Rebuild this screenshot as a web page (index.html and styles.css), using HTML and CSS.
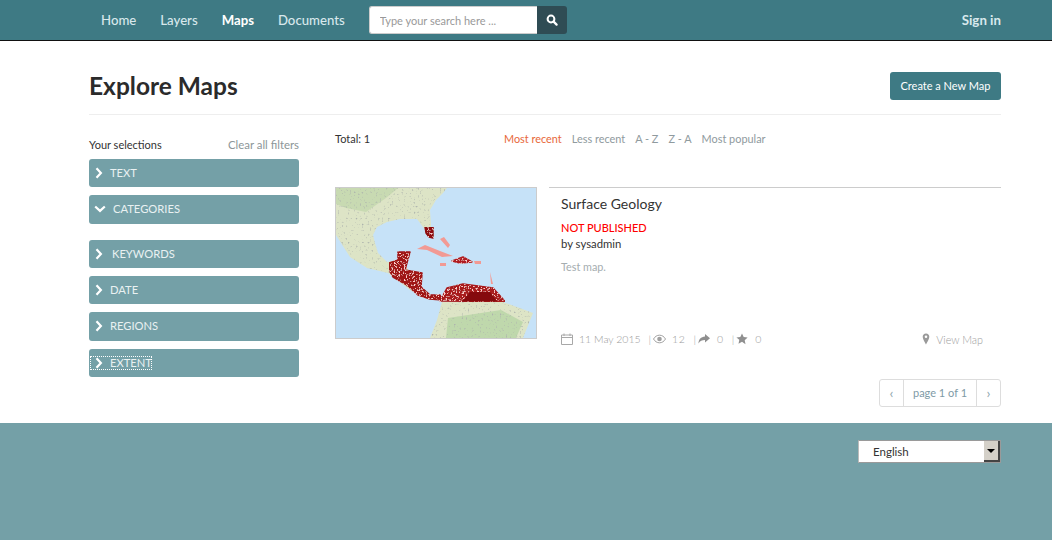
FILE: index.html
```html
<!DOCTYPE html>
<html>

<head>
    <title>Explore Maps</title>
    <link rel="stylesheet" href="styles.css">
</head>

<body>
    <header class="navbar">
        <nav class="nav-links">
            <a href="#">Home</a>
            <a href="#">Layers</a>
            <a href="#" class="active">Maps</a>
            <a href="#">Documents</a>
        </nav>
        <form class="search">
            <input type="text" placeholder="Type your search here ...">
            <button type="button" aria-label="Search">
                <svg width="12" height="12" viewBox="0 0 12 12"><circle cx="5" cy="5" r="3.4" fill="none" stroke="#fff" stroke-width="2"/><path d="M7.6 7.6l3 3" stroke="#fff" stroke-width="2.2" stroke-linecap="round"/></svg>
            </button>
        </form>
        <a href="#" class="sign-in">Sign in</a>
    </header>

    <main class="page">
        <div class="page-head">
            <h1>Explore Maps</h1>
            <a href="#" class="btn-create">Create a New Map</a>
        </div>

        <div class="columns">
            <aside class="sidebar">
                <div class="selections">
                    <span>Your selections</span>
                    <a href="#">Clear all filters</a>
                </div>
                <div class="filter"><svg class="chev" viewBox="0 0 8 12"><path d="M1.500 1.200l4.400 4.800-4.400 4.800" /></svg><span class="t-text">TEXT</span></div>
                <div class="filter tall open"><svg class="chev-down" viewBox="0 0 12 8"><path d="M1.200 1.500l4.800 4.400 4.800-4.400" /></svg><span class="t-cat">CATEGORIES</span></div>
                <div class="filter"><svg class="chev" viewBox="0 0 8 12"><path d="M1.500 1.200l4.400 4.800-4.400 4.800" /></svg><span class="t-key">KEYWORDS</span></div>
                <div class="filter"><svg class="chev" viewBox="0 0 8 12"><path d="M1.500 1.200l4.400 4.800-4.400 4.800" /></svg><span class="t-text">DATE</span></div>
                <div class="filter tall"><svg class="chev" viewBox="0 0 8 12"><path d="M1.500 1.200l4.400 4.800-4.400 4.800" /></svg><span class="t-text">REGIONS</span></div>
                <div class="filter focused"><svg class="chev" viewBox="0 0 8 12"><path d="M1.500 1.200l4.400 4.800-4.400 4.800" /></svg><span class="t-text">EXTENT</span></div>
            </aside>

            <section class="results">
                <div class="toolbar">
                    <span class="total">Total: 1</span>
                    <div class="sort">
                        <a href="#" class="current">Most recent</a>
                        <a href="#">Less recent</a>
                        <a href="#">A - Z</a>
                        <a href="#">Z - A</a>
                        <a href="#">Most popular</a>
                    </div>
                </div>

                <article class="item">
                    <svg class="thumb" viewBox="0 0 200 150" preserveAspectRatio="none">
                        <defs>
                            <filter id="land-noise" x="0" y="0" width="100%" height="100%">
                                <feTurbulence type="fractalNoise" baseFrequency=".5" numOctaves="2" seed="4" result="n"/>
                                <feColorMatrix in="n" values="0 0 0 0 .42  0 0 0 0 .45  0 0 0 0 .42  0 0 0 5 -3.100" result="dots"/>
                                <feComposite in="dots" in2="SourceGraphic" operator="in" result="cut"/>
                                <feMerge><feMergeNode in="SourceGraphic"/><feMergeNode in="cut"/></feMerge>
                            </filter>
                            <filter id="red-noise" x="0" y="0" width="100%" height="100%">
                                <feTurbulence type="fractalNoise" baseFrequency=".6" numOctaves="2" seed="9" result="n"/>
                                <feColorMatrix in="n" values="0 0 0 0 .98  0 0 0 0 .62  0 0 0 0 .6  0 0 0 7 -3.900" result="dots"/>
                                <feComposite in="dots" in2="SourceGraphic" operator="in" result="cut"/>
                                <feMerge><feMergeNode in="SourceGraphic"/><feMergeNode in="cut"/></feMerge>
                            </filter>
                        </defs>
                        <rect width="200" height="150" fill="#c6e2f8"/>
                        <g filter="url(#land-noise)">
                            <path fill="#dde4c6" d="M0 0H111L107 5 100 12 94 22 95 37 94 49 87 39 81 31 64 31 51 34 41 39 37 47 39 55 42 65 51 74 62 72 74 64 70 78 78 92 84 108 94 112 74 102 52 85 31 80 14 69 0 47Z"/>
                            <path fill="#c8dab2" d="M0 0H62L50 10 30 24 10 20 0 16Z"/>
                            <path fill="#dde4c6" d="M106 114H167L197 125 187 150H94L101 132Z"/>
                            <path fill="#bfd8ac" d="M112 130L165 122 187 134 180 150H110Z"/>
                        </g>
                        <g fill="#f29a94">
                            <path d="M81 61L89 57 104 63 117 68 106 69 91 62Z"/>
                            <path d="M138 73h7v3h-6ZM104 75h6v3h-6ZM104 51l4-2 6 8-2 3ZM154 84l3 12h-2Z"/>
                        </g>
                        <g filter="url(#red-noise)" stroke-width="1.500" stroke-linejoin="round">
                            <path fill="#8e0f12" stroke="#8e0f12" d="M89 39H97L97 50 93 49 90 45Z"/>
                            <path fill="#a01517" stroke="#a01517" d="M53 75L62 72 62 64 74 64 69 82 86 85 85 99 94 107 104 107 106 112 94 111 82 107 71 97 57 89 53 82Z"/>
                            <path fill="#b01f21" stroke="#b01f21" d="M116 73L127 69 136 74 124 75Z"/>
                            <path fill="#a81a1c" stroke="#a81a1c" d="M104 113L111 100 127 96 157 100 169 113.500Z"/>
                        </g>
                        <path fill="#850a0d" d="M126 113.500L134 104 154 104 161 113.500Z"/>
                    </svg>
                    <div class="item-body">
                        <h2>Surface Geology</h2>
                        <div class="status">NOT PUBLISHED</div>
                        <div class="owner">by sysadmin</div>
                        <p class="abstract">Test map.</p>
                        <div class="meta">
                            <svg class="ico cal" viewBox="0 0 12 12"><path d="M.5 2h11v9.500H.5zM.5 4.500h11" fill="none" stroke="#a8a8a8"/><path d="M3 .5V3M9 .5V3" stroke="#a8a8a8"/></svg>
                            <span class="date">11 May 2015</span>
                            <span class="sep">|</span>
                            <svg class="ico eye" viewBox="0 0 13 10"><path d="M.5 5C2 2.500 4 1.200 6.500 1.200S11 2.500 12.500 5C11 7.500 9 8.800 6.500 8.800S2 7.500 .5 5Z" fill="none" stroke="#a0a0a0"/><circle cx="6.500" cy="5" r="2.300" fill="#a0a0a0"/></svg>
                            <span class="count views">12</span>
                            <span class="sep">|</span>
                            <svg class="ico share" viewBox="0 0 12 10"><path d="M7 0l5 4.200-5 4.200V6C4 6 2 6.800 .5 9.500 .5 5.500 3 2.800 7 2.500Z" fill="#8f8f8f"/></svg>
                            <span class="count">0</span>
                            <span class="sep">|</span>
                            <svg class="ico star" viewBox="0 0 12 12"><path d="M6 .5l1.700 3.600 3.900.5-2.900 2.700.8 3.900L6 8.800l-3.500 1.900.8-3.900L.4 4.600l3.900-.5Z" fill="#8f8f8f"/></svg>
                            <span class="count">0</span>
                            <a href="#" class="view-link">
                                <svg class="ico pin" viewBox="0 0 8 12"><path d="M4 .5C2 .5.700 2 .700 3.800.700 6 4 11.500 4 11.500S7.300 6 7.300 3.800C7.300 2 6 .5 4 .5Zm0 2a1.300 1.300 0 1 1 0 2.600 1.300 1.300 0 0 1 0-2.600Z" fill="#9a9a9a" fill-rule="evenodd"/></svg>
                                View Map
                            </a>
                        </div>
                    </div>
                </article>

                <div class="pager">
                    <a href="#" class="arrow">&#8249;</a>
                    <span class="page-count">page 1 of 1</span>
                    <a href="#" class="arrow">&#8250;</a>
                </div>
            </section>
        </div>
    </main>

    <footer class="footer">
        <div class="lang">
            <span class="lang-value">English</span>
            <span class="lang-btn"><i></i></span>
        </div>
    </footer>
</body>

</html>
```

FILE: styles.css
```css
/* Base */
html,
body {
  margin: 0;
  padding: 0;
}

body {
  font-family: Lato, "Open Sans", sans-serif;
  font-size: 11px;
  color: #333;
  background: #fff;
  height: 540px;
  overflow: hidden;
}

a {
  text-decoration: none;
}

/* Top bar */
.navbar {
  display: flex;
  align-items: center;
  height: 40px;
  padding: 0 51px 0 89px;
  background: #3e7a84;
  border-bottom: 1px solid #111;
}

.nav-links {
  display: flex;
  gap: 24px;
  padding-left: 12px;
}

.nav-links a {
  color: #d8e8ec;
  font-size: 13.200px;
  font-weight: 500;
}

.nav-links a.active {
  color: #fff;
  font-weight: 700;
}

.search {
  display: flex;
  margin: 0 0 0 24px;
  height: 28px;
}

.search input {
  width: 168px;
  box-sizing: border-box;
  height: 28px;
  padding: 0 10px;
  border: 1px solid #ccc;
  border-right: 0;
  border-radius: 3px 0 0 3px;
  font-family: Lato, sans-serif;
  font-size: 11px;
  background: #fff;
  outline: 0;
}

.search input::placeholder {
  color: #999;
  opacity: 1;
}

.search button {
  display: flex;
  align-items: center;
  justify-content: center;
  width: 30px;
  padding: 0;
  border: 0;
  border-radius: 0 3px 3px 0;
  background: #2f4c54;
}

.sign-in {
  margin-left: auto;
  color: #d8e8ec;
  font-size: 13.300px;
  font-weight: 700;
}

/* Page */
.page {
  width: 912px;
  height: 382px;
  margin-left: 89px;
}

.page-head {
  display: flex;
  align-items: flex-end;
  justify-content: space-between;
  height: 74px;
  padding-bottom: 14px;
  box-sizing: border-box;
  border-bottom: 1px solid #eee;
}

.page-head h1 {
  margin: 0;
  color: #2b2b2b;
  font-size: 24.500px;
  font-weight: 700;
  line-height: 28px;
}

.btn-create {
  display: block;
  padding: 0 10.500px;
  line-height: 28px;
  border-radius: 3px;
  background: #3e7a84;
  color: #fff;
  font-size: 11px;
}

.columns {
  display: flex;
}

/* Filters */
.sidebar {
  width: 210px;
  flex: none;
  padding-top: 22px;
}

.selections {
  display: flex;
  justify-content: space-between;
  line-height: 16px;
  margin-bottom: 6px;
}

.selections a {
  color: #8c9698;
  font-size: 11.400px;
}

.filter {
  display: flex;
  align-items: center;
  height: 28px;
  margin-bottom: 8px;
  padding-left: 6px;
  padding-bottom: 1px;
  box-sizing: border-box;
  border-radius: 3px;
  background: #74a0a7;
  color: #e9f1f2;
  font-size: 11.200px;
}

.filter.tall {
  height: 29px;
  padding-bottom: 2px;
}

.filter.open {
  margin-bottom: 16px;
}

.chev,
.chev-down {
  fill: none;
  stroke: #fff;
  stroke-width: 2.200;
  flex: none;
}

.chev {
  width: 8px;
  height: 12px;
}

.chev-down {
  width: 12px;
  height: 8px;
  margin-left: -1px;
}

.t-text {
  margin-left: 7px;
}

.t-cat {
  margin-left: 7px;
}

.t-key {
  margin-left: 9px;
}

.filter.focused {
  position: relative;
}

/* dotted focus ring left on the last panel */
.filter.focused::after {
  content: "";
  position: absolute;
  left: 1px;
  top: 7px;
  width: 60px;
  height: 12px;
  border: 1px dotted #fff;
}

/* Results */
.results {
  flex: 1;
  margin-left: 36px;
}

.toolbar {
  display: flex;
  height: 72px;
  padding-top: 16px;
  box-sizing: border-box;
  line-height: 16px;
}

.total {
  width: 169px;
  color: #333;
}

.sort {
  display: flex;
  gap: 10px;
  font-size: 10.900px;
}

.sort a {
  color: #8f9a9e;
}

.sort a.current {
  color: #e8683a;
}

.item {
  display: flex;
  align-items: flex-start;
  gap: 12px;
}

.thumb {
  display: block;
  width: 200px;
  height: 150px;
  flex: none;
  border: 1px solid #ccc;
}

.item-body {
  flex: 1;
  display: flex;
  flex-direction: column;
  height: 160px;
  box-sizing: border-box;
  padding: 0 18px 0 12px;
  border-top: 1px solid #ccc;
}

.item-body h2 {
  margin: 7px 0 0;
  color: #333;
  font-size: 14px;
  font-weight: 400;
  line-height: 18px;
}

.status {
  margin-top: 7px;
  color: #f00;
  font-weight: 500;
  line-height: 16px;
}

.owner {
  font-size: 11.300px;
  line-height: 16px;
}

.abstract {
  margin: 7px 0 0;
  color: #a5adb0;
  font-size: 10.800px;
  line-height: 16px;
}

.meta {
  display: flex;
  align-items: center;
  margin-top: auto;
  height: 16px;
  color: #9a9a9a;
  font-size: 10.500px;
  font-weight: 300;
}

.ico {
  display: block;
  flex: none;
}

.cal {
  width: 12px;
  height: 12px;
  margin-right: 6px;
}

.sep {
  margin: 0 2px 0 8px;
}

.eye {
  width: 13px;
  height: 10px;
}

.count {
  margin-left: 7px;
  letter-spacing: .6px;
}

.views {
  margin-left: 6px;
}

.share {
  width: 12px;
  height: 10px;
}

.star {
  width: 12px;
  height: 12px;
}

.pin {
  width: 8px;
  height: 12px;
  margin-right: 6px;
}

.view-link {
  display: flex;
  align-items: center;
  margin-left: auto;
  color: #9a9a9a;
  font-size: 10.800px;
}

/* Pager */
.pager {
  display: flex;
  width: 122px;
  height: 28px;
  margin: 32px 0 0 auto;
  border: 1px solid #ddd;
  border-radius: 3px;
  box-sizing: border-box;
  font-size: 11px;
  line-height: 26px;
}

.pager .arrow {
  width: 23px;
  text-align: center;
  color: #8fa6ae;
  font-size: 14px;
}

.page-count {
  flex: 1;
  text-align: center;
  color: #7e9aa6;
  border-left: 1px solid #ddd;
  border-right: 1px solid #ddd;
}

/* Footer */
.footer {
  display: flex;
  justify-content: flex-end;
  height: 117px;
  padding: 17px 51px 0 0;
  box-sizing: border-box;
  background: #74a0a7;
}

.lang {
  display: flex;
  width: 143px;
  height: 23px;
  box-sizing: border-box;
  border: 1px solid #9a9a9a;
  border-left-color: #bbb;
  background: #fff;
}

.lang-value {
  flex: 1;
  padding-left: 14px;
  color: #333;
  font-size: 11.500px;
  line-height: 21px;
}

.lang-btn {
  display: flex;
  align-items: center;
  justify-content: center;
  width: 16px;
  background: #d4d0c8;
  border-right: 2px solid #444;
  border-bottom: 2px solid #444;
  box-sizing: border-box;
}

.lang-btn i {
  width: 0;
  height: 0;
  border: 4px solid transparent;
  border-top-color: #000;
  border-bottom: 0;
}
```
